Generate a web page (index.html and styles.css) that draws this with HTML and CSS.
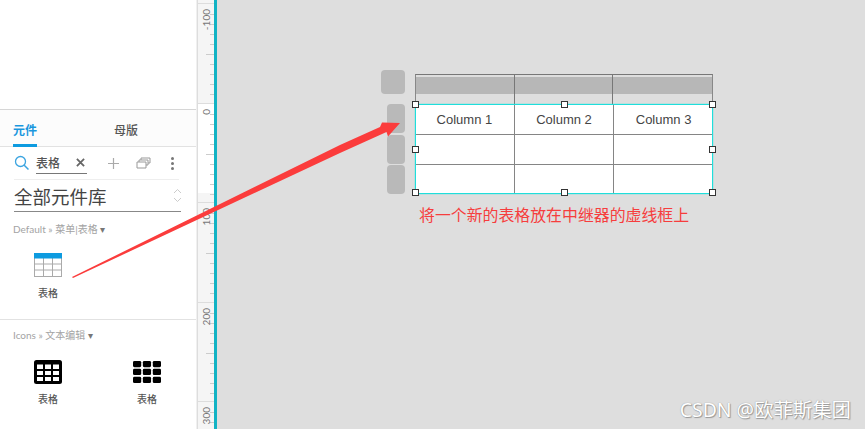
FILE: index.html
```html
<!DOCTYPE html>
<html lang="en">
<head>
    <meta charset="UTF-8">
    <meta name="viewport" content="width=device-width, initial-scale=1.0">
    <title>元件库</title>
    <link rel="stylesheet" href="styles.css">
</head>
<body>
    <div class="app">
        <aside class="panel">
            <div class="panel-top"></div>
            <div class="tabs">
                <div class="tab active">元件</div>
                <div class="tab">母版</div>
            </div>
            <div class="search-row">
                <svg class="search-icon" width="16" height="16" viewBox="0 0 16 16">
                    <circle cx="6.5" cy="6.5" r="5" fill="none" stroke="#3ba4e0" stroke-width="1.3"/>
                    <line x1="10.2" y1="10.2" x2="14.5" y2="14.5" stroke="#3ba4e0" stroke-width="1.5"/>
                </svg>
                <div class="search-box">
                    <span>表格</span>
                    <svg width="9" height="9" viewBox="0 0 10 10">
                        <path d="M1 1L9 9M9 1L1 9" stroke="#666" stroke-width="2"/>
                    </svg>
                </div>
                <svg class="tool-plus" width="11" height="11" viewBox="0 0 11 11">
                    <path d="M5.5 0V11M0 5.5H11" stroke="#aaa" stroke-width="1.2"/>
                </svg>
                <svg class="tool-copy" width="15" height="12" viewBox="0 0 15 12">
                    <path d="M1 5H10V11H1ZM3 5V3H12V8H10M5 3V1H14V6H12" fill="none" stroke="#999" stroke-width="1"/>
                </svg>
                <div class="tool-dots"><i></i><i></i><i></i></div>
            </div>
            <div class="lib-select">
                <span>全部元件库</span>
                <svg width="9" height="15" viewBox="0 0 9 15">
                    <path d="M1 5L4.5 1.5L8 5M1 10L4.5 13.5L8 10" fill="none" stroke="#ccc" stroke-width="1"/>
                </svg>
            </div>
            <div class="crumb">Default » 菜单|表格 <em>▾</em></div>
            <div class="widgets first">
                <div class="widget">
                    <svg width="28" height="24" viewBox="0 0 28 24">
                        <rect x="0.5" y="0.5" width="27" height="23" fill="#fff" stroke="#aaa"/>
                        <path d="M0 11H28M0 17H28M9.5 5V24M18.5 5V24" stroke="#aaa" stroke-width="1"/>
                        <rect width="28" height="5.5" fill="#0d9be0"/>
                    </svg>
                    <span>表格</span>
                </div>
            </div>
            <div class="section">
                <div class="crumb">Icons » 文本编辑 <em>▾</em></div>
                <div class="widgets">
                    <div class="widget">
                        <svg width="28" height="24" viewBox="0 0 28 24">
                            <rect width="28" height="24" rx="2.5" fill="#000"/>
                            <path d="M3 4.5H9V9H3ZM11 4.5H17V9H11ZM19 4.5H25V9H19ZM3 11H9V15H3ZM11 11H17V15H11ZM19 11H25V15H19ZM3 17H9V21H3ZM11 17H17V21H11ZM19 17H25V21H19Z" fill="#fff"/>
                        </svg>
                        <span>表格</span>
                    </div>
                    <div class="widget">
                        <svg width="28" height="24" viewBox="0 0 29 24">
                            <rect x="0" y="0.5" width="8.5" height="6.5" rx="1.5"/>
                            <rect x="10.2" y="0.5" width="8.5" height="6.5" rx="1.5"/>
                            <rect x="20.5" y="0.5" width="8.5" height="6.5" rx="1.5"/>
                            <rect x="0" y="8.7" width="8.5" height="6.5" rx="1.5"/>
                            <rect x="10.2" y="8.7" width="8.5" height="6.5" rx="1.5"/>
                            <rect x="20.5" y="8.7" width="8.5" height="6.5" rx="1.5"/>
                            <rect x="0" y="17" width="8.5" height="6.5" rx="1.5"/>
                            <rect x="10.2" y="17" width="8.5" height="6.5" rx="1.5"/>
                            <rect x="20.5" y="17" width="8.5" height="6.5" rx="1.5"/>
                        </svg>
                        <span>表格</span>
                    </div>
                </div>
            </div>
        </aside>

        <div class="ruler">
            <div class="ruler-mark"></div>
            <div class="ruler-part"><span>-100</span></div>
            <div class="ruler-part"><span>0</span></div>
            <div class="ruler-part"><span>100</span></div>
            <div class="ruler-part"><span>200</span></div>
            <div class="ruler-part"><span>300</span></div>
        </div>
        <div class="guide"></div>

        <main class="canvas">
            <div class="rep-corner"></div>
            <div class="rep-btn rep-1"></div>
            <div class="rep-btn rep-2"></div>
            <div class="rep-btn rep-3"></div>

            <div class="head-row">
                <div class="head-cell"></div>
                <div class="head-cell"></div>
                <div class="head-cell"></div>
            </div>

            <table class="grid">
                <tr><td>Column 1</td><td>Column 2</td><td>Column 3</td></tr>
                <tr><td></td><td></td><td></td></tr>
                <tr><td></td><td></td><td></td></tr>
            </table>

            <i class="handle" style="left:198px;top:104px"></i>
            <i class="handle" style="left:347px;top:104px"></i>
            <i class="handle" style="left:495px;top:104px"></i>
            <i class="handle" style="left:198px;top:149px"></i>
            <i class="handle" style="left:495px;top:149px"></i>
            <i class="handle" style="left:198px;top:192px"></i>
            <i class="handle" style="left:347px;top:192px"></i>
            <i class="handle" style="left:495px;top:192px"></i>

            <p class="note">将一个新的表格放在中继器的虚线框上</p>
            <div class="watermark">CSDN @欧菲斯集团</div>
        </main>

        <svg class="arrow" width="865" height="429" viewBox="0 0 865 429">
            <path d="M72 277L340 145L380 127L382 122.5L400 123L388 136.5L386.5 132L340 153L73 278Z" fill="#fb3c3c"/>
        </svg>
    </div>
</body>
</html>
```

FILE: styles.css
```css
* {
    box-sizing: border-box;
}
body {
    margin: 0;
    font-family: "Noto Sans CJK SC", sans-serif;
    background-color: #dedede;
    overflow: hidden;
}
.app {
    position: relative;
    display: flex;
    width: 865px;
    height: 429px;
}

/* left panel */
.panel {
    width: 197px;
    flex: none;
    display: flex;
    flex-direction: column;
    background-color: #fff;
    border-right: 1px solid #f0f0f0;
}
.panel-top {
    height: 110px;
    border-bottom: 1px solid #d6d6d6;
}
.tabs {
    display: flex;
    height: 37px;
    background-color: #fcfcfc;
    border-bottom: 1px solid #e2e2e2;
    font-size: 12px;
    font-weight: 500;
    line-height: 40px;
}
.tab {
    width: 100px;
    padding-left: 13px;
    color: #555;
}
.tab + .tab {
    padding-left: 16px;
}
.tab.active {
    position: relative;
    color: #1a97de;
    font-weight: 700;
}
.tab.active::after {
    content: "";
    position: absolute;
    left: 13px;
    bottom: -1px;
    width: 24px;
    height: 3px;
    background-color: #0d9be0;
}
.search-row {
    display: flex;
    align-items: center;
    height: 33px;
    margin: 0 17px 0 14px;
    border-bottom: 1px solid #eee;
}
.search-box {
    display: flex;
    align-items: center;
    justify-content: space-between;
    width: 51px;
    height: 22px;
    margin-left: 6px;
    padding-right: 1px;
    border-bottom: 1px solid #777;
    font-size: 12px;
    font-weight: 500;
    color: #555;
}
.search-box svg {
    margin-right: 1px;
}
.tool-plus {
    margin-left: 21px;
}
.tool-copy {
    margin-left: 17px;
}
.tool-dots {
    display: flex;
    flex-direction: column;
    gap: 2px;
    margin-left: 20px;
}
.tool-dots i {
    display: block;
    width: 3px;
    height: 3px;
    border-radius: 50%;
    background-color: #777;
}
.lib-select {
    display: flex;
    align-items: center;
    justify-content: space-between;
    height: 32px;
    margin: 0 15px 0 14px;
    border-bottom: 1px solid #888;
    font-size: 18.5px;
    color: #444;
}
.lib-select svg {
    margin-right: -1px;
}
.crumb {
    margin: 10px 0 0 13px;
    font-family: Lato, "Noto Sans CJK SC", sans-serif;
    font-size: 10px;
    line-height: 14px;
    color: #a3a3a3;
}
.crumb em {
    font-style: normal;
    color: #777;
}
.widgets {
    display: flex;
}
.widget {
    width: 99px;
    flex: none;
    padding-left: 34px;
    display: flex;
    flex-direction: column;
    font-size: 10px;
    line-height: 14px;
    font-weight: 500;
    color: #555;
}
.widget span {
    width: 28px;
    margin-top: 9px;
    text-align: center;
}
.widgets.first {
    height: 83px;
    padding-top: 17px;
    flex: none;
}
.section {
    border-top: 1px solid #e2e2e2;
}
.section .crumb {
    margin-top: 8px;
}
.section .widgets {
    margin-top: 18px;
}
.section .widget span {
    margin-top: 8px;
}

/* ruler */
.ruler {
    position: relative;
    width: 17px;
    flex: none;
    padding-top: 3px;
    background-color: #f5f5f5;
    border-left: 1px solid #ddd;
    overflow: hidden;
}
.ruler-mark {
    position: absolute;
    left: 0;
    top: 104px;
    width: 100%;
    height: 89px;
    background-color: #fff;
}
.ruler-part {
    position: relative;
    height: 99.5px;
    border-top: 1px solid #ddd;
    background-image:
        linear-gradient(#ccc, #ccc),
        repeating-linear-gradient(#ccc 0, #ccc 1px, transparent 1px, transparent 10px);
    background-repeat: no-repeat;
    background-size: 8px 1px, 4px 100%;
    background-position: right 0 top 50px, right 0 top 10px;
}
.ruler-part span {
    position: absolute;
    left: 2px;
    top: 5px;
    writing-mode: vertical-rl;
    transform: rotate(180deg);
    font-family: Lato, sans-serif;
    font-size: 10px;
    line-height: 12px;
    color: #777;
}
.guide {
    width: 3px;
    flex: none;
    background-color: #12b3c4;
}

/* canvas */
.canvas {
    position: relative;
    flex: 1;
    background-color: #dedede;
}
.rep-corner,
.rep-btn {
    position: absolute;
    background-color: #b9b9b9;
    border-radius: 4px;
}
.rep-corner {
    left: 164px;
    top: 70px;
    width: 24px;
    height: 24px;
}
.rep-btn {
    left: 170px;
    width: 18px;
    height: 29px;
}
.rep-1 {
    top: 104px;
}
.rep-2 {
    top: 135px;
}
.rep-3 {
    top: 165px;
}
.head-row {
    position: absolute;
    left: 198px;
    top: 74px;
    width: 298px;
    height: 30px;
    display: flex;
    border-top: 1px solid #777;
    border-left: 1px solid #888;
    border-right: 1px solid #888;
}
.head-cell {
    width: 99.5px;
    height: 100%;
    border-right: 1px solid #777;
    background: linear-gradient(#b7b7b7, #b7b7b7) no-repeat 0 2px / 100% 17px;
}
.head-cell:last-child {
    border-right: 0;
}
.grid {
    position: absolute;
    left: 198px;
    top: 104px;
    width: 298px;
    height: 89px;
    border-collapse: collapse;
    table-layout: fixed;
    background-color: #fff;
    outline: 1px solid #1fdedb;
    outline-offset: -1px;
    box-shadow: 0 0 1px #1fdedb;
}
.grid td {
    height: 30px;
    padding: 1px 0 0;
    border: 1px solid #858585;
    text-align: center;
    font-family: "Liberation Sans", sans-serif;
    font-size: 13px;
    color: #444;
}
.grid tr:first-child td {
    border-top: 0;
}
.grid tr:last-child td {
    border-bottom: 0;
}
.grid td:first-child {
    border-left: 0;
}
.grid td:last-child {
    border-right: 0;
}
.handle {
    position: absolute;
    width: 7px;
    height: 7px;
    margin: -3px 0 0 -3px;
    background-color: #fff;
    border: 1px solid #333;
}
.note {
    position: absolute;
    left: 202px;
    top: 204px;
    margin: 0;
    font-size: 15.9px;
    line-height: 22px;
    color: #f63d3d;
    white-space: nowrap;
}
.watermark {
    position: absolute;
    right: 14px;
    bottom: 7px;
    font-family: "Noto Sans", "Noto Sans CJK SC", sans-serif;
    font-size: 19.4px;
    line-height: 24px;
    color: #fff;
    text-shadow: 0 0 1px #888, 1px 1px 1px #999;
    white-space: nowrap;
}
.arrow {
    position: absolute;
    left: 0;
    top: 0;
    pointer-events: none;
}
```
